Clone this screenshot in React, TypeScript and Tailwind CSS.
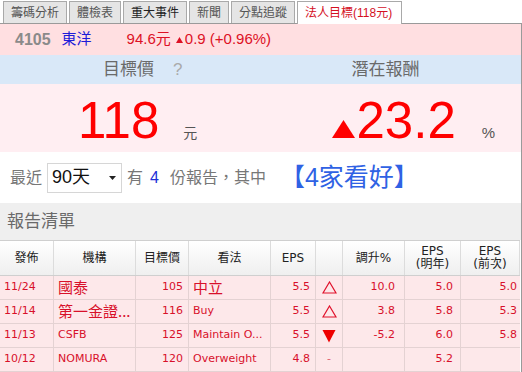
import React from 'react'

const tabs = ['籌碼分析', '體檢表', '重大事件', '新聞', '分點追蹤']

type Report = {
  date: string
  broker: string
  target: string
  view: string
  eps: string
  dir: 'up' | 'down' | 'none'
  pct: string
  next: string
  prev: string
}

const reports: Report[] = [
  { date: '11/24', broker: '國泰', target: '105', view: '中立', eps: '5.5', dir: 'up', pct: '10.0', next: '5.0', prev: '5.0' },
  { date: '11/14', broker: '第一金證...', target: '116', view: 'Buy', eps: '5.5', dir: 'up', pct: '3.8', next: '5.8', prev: '5.3' },
  { date: '11/13', broker: 'CSFB', target: '125', view: 'Maintain O...', eps: '5.5', dir: 'down', pct: '-5.2', next: '6.0', prev: '5.8' },
  { date: '10/12', broker: 'NOMURA', target: '120', view: 'Overweight', eps: '4.8', dir: 'none', pct: '', next: '5.2', prev: '' },
]

const grid = 'grid grid-cols-[54px_82px_53px_82px_45px_27px_62px_56px_59px]'

const isCjk = (s: string) => /[\u4e00-\u9fff]/.test(s)

function Cell({ text, align }: { text: string; align: 'left' | 'right' | 'center' }) {
  const alignCls =
    align === 'left' ? 'justify-start pl-[4px]' : align === 'right' ? 'justify-end pr-[5px]' : 'justify-center'
  const fontCls = isCjk(text)
    ? "text-[15px] font-['Noto_Sans_CJK_TC',sans-serif]"
    : "text-[11px] font-['DejaVu_Sans',sans-serif]"
  return (
    <div className={`flex items-center overflow-hidden whitespace-nowrap border-r border-[#e4d2d3] ${alignCls} ${fontCls}`}>
      {text}
    </div>
  )
}

function Arrow({ dir }: { dir: Report['dir'] }) {
  return (
    <div className="flex items-center justify-center border-r border-[#e4d2d3]">
      {dir === 'up' && (
        <svg width="15" height="13" viewBox="0 0 15 13">
          <polygon points="7.5,1 14,12 1,12" fill="none" stroke="#e0102a" strokeWidth="1.2" />
        </svg>
      )}
      {dir === 'down' && (
        <svg width="14" height="14" viewBox="0 0 14 14">
          <polygon points="0.5,1 13.5,1 7,13.5" fill="#ee0000" />
        </svg>
      )}
      {dir === 'none' && <span className="text-[11px] font-['DejaVu_Sans',sans-serif] text-[#e06070]">-</span>}
    </div>
  )
}

export default function App() {
  return (
    <div className="w-[522px] h-[372px] overflow-hidden bg-white font-['Liberation_Sans','Noto_Sans_CJK_TC',sans-serif]">
      {/* tab strip */}
      <div className="flex h-[24px] items-end gap-[2px] border-b border-[#9a9a9a] pl-[3px]">
        {tabs.map((t, i) => (
          <div
            key={t}
            className={`flex h-[22px] items-center border border-b-0 border-[#a9a9a9] bg-[#e5e5e5] px-[7px] text-[12px] ${
              i === 2 ? 'text-[#222]' : 'text-[#555]'
            }`}
          >
            {t}
          </div>
        ))}
        <div className="relative z-10 -mb-px flex h-[23px] items-center border border-b-0 border-[#a9a9a9] bg-white pl-[7px] pr-[9px] text-[12px] text-[#d4101f]">
          法人目標(118元)
        </div>
      </div>

      <div className="w-[522px] border-r border-[#9a9a9a]">
        {/* quote line */}
        <div className="flex h-[31px] items-center bg-[#ffdfe1] pl-[15px] text-[15px]">
          <span className="text-[16px] font-bold text-[#8a8a8a]">4105</span>
          <span className="ml-[11px] text-[#1d1dd8]">東洋</span>
          <span className="ml-[35px] text-[#dd1125]">94.6元</span>
          <span className="ml-[5px] flex items-center text-[#dd1125]">
            <svg width="7" height="6" viewBox="0 0 7 6" className="mr-[2px]">
              <polygon points="3.5,0 7,6 0,6" fill="#dd1125" />
            </svg>
            0.9 (+0.96%)
          </span>
        </div>

        {/* headers */}
        <div className="grid h-[29px] grid-cols-2 bg-[#d9e8f8] text-[17px] text-[#6a6a6a]">
          <div className="flex items-center pl-[103px]">
            目標價<span className="ml-[19px] text-[#aaa]">?</span>
          </div>
          <div className="flex items-center pl-[91px]">潛在報酬</div>
        </div>

        {/* big figures */}
        <div className="grid h-[68px] grid-cols-2 bg-[#ffeef2] pt-[11px]">
          <div className="flex items-baseline pl-[78px]">
            <span className="text-[51px] leading-none text-[#f00]">118</span>
            <span className="ml-[24px] text-[14px] text-[#555]">元</span>
          </div>
          <div className="flex items-baseline pl-[71px]">
            <svg width="23" height="18" viewBox="0 0 23 18" className="mb-[10px]">
              <polygon points="11.5,0 23,18 0,18" fill="#f00" />
            </svg>
            <span className="ml-[2px] text-[51px] leading-none text-[#f00]">23.2</span>
            <span className="ml-[26px] text-[15px] text-[#555]">%</span>
          </div>
        </div>

        {/* period selector */}
        <div className="flex h-[51px] items-center pl-[10px] text-[16px] text-[#777]">
          最近
          <div className="ml-[5px] flex h-[30px] w-[75px] items-center border border-[#d6d6d6] bg-white pl-[4px] pr-[5px]">
            <span className="text-[18px] text-[#111]">90天</span>
            <svg width="7" height="4" viewBox="0 0 7 4" className="ml-auto">
              <polygon points="0,0 7,0 3.5,4" fill="#222" />
            </svg>
          </div>
          <span className="ml-[5px]">有</span>
          <span className="ml-[7px] mr-[11px] text-[#1d2fd8]">4</span>
          份報告，其中
          <span className="ml-[14px] text-[25px] text-[#2f62e4]">【4家看好】</span>
        </div>

        {/* section title */}
        <div className="flex h-[37px] items-center bg-[#efefef] pl-[7px] text-[17px] text-[#6a6a6a]">報告清單</div>

        {/* table */}
        <div className="w-[520px]">
          <div className={`${grid} h-[36px] border-y border-[#cfcfcf] bg-linear-to-b from-white to-[#efefef] text-[12px] leading-[13px] text-[#222]`}>
            {['發佈', '機構', '目標價', '看法', 'EPS', '', '調升%', 'EPS\n(明年)', 'EPS\n(前次)'].map((h, i) => (
              <div
                key={i}
                className="flex items-center justify-center whitespace-pre border-r border-[#dcdcdc] text-center font-['DejaVu_Sans','Noto_Sans_CJK_TC',sans-serif]"
              >
                {h}
              </div>
            ))}
          </div>
          {reports.map((r) => (
            <div key={r.date} className={`${grid} h-[24px] border-b border-[#e4d2d3] bg-[#fde8ea] text-[#d8102a]`}>
              <Cell text={r.date} align="left" />
              <Cell text={r.broker} align="left" />
              <Cell text={r.target} align="right" />
              <Cell text={r.view} align="left" />
              <Cell text={r.eps} align="right" />
              <Arrow dir={r.dir} />
              <div className="flex items-center justify-end border-r border-[#e4d2d3] pr-[9px] text-[11px] font-['DejaVu_Sans',sans-serif]">
                {r.pct}
              </div>
              <div className="flex items-center justify-end border-r border-[#e4d2d3] pr-[7px] text-[11px] font-['DejaVu_Sans',sans-serif]">
                {r.next}
              </div>
              <div className="flex items-center justify-end pr-[3px] text-[11px] font-['DejaVu_Sans',sans-serif]">
                {r.prev}
              </div>
            </div>
          ))}
        </div>
      </div>
    </div>
  )
}
